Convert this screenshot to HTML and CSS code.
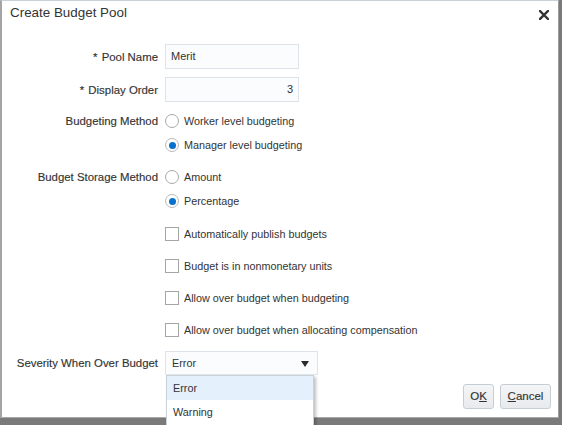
FILE: index.html
```html
<!DOCTYPE html>
<html lang="en">
<head>
<meta charset="utf-8">
<title>Create Budget Pool</title>
<link rel="stylesheet" href="styles.css">
</head>
<body>
<div class="dialog">
  <div class="header">
    <h1 class="title">Create Budget Pool</h1>
    <span class="close" aria-label="Close">
      <svg width="10" height="10" viewBox="0 0 10 10"><path d="M1 1 L9 9 M9 1 L1 9" stroke="#333" stroke-width="2.4" stroke-linecap="square"/></svg>
    </span>
  </div>

  <div class="form">
    <div class="field field-text">
      <span class="label"><span class="req">*</span> Pool Name</span>
      <span class="input">Merit</span>
    </div>
    <div class="field field-text next-text">
      <span class="label"><span class="req">*</span> Display Order</span>
      <span class="input num">3</span>
    </div>

    <div class="field field-choice group-start first-group">
      <span class="label">Budgeting Method</span>
      <span class="choice"><span class="radio"></span>Worker level budgeting</span>
    </div>
    <div class="field field-choice">
      <span class="label"></span>
      <span class="choice"><span class="radio checked"></span>Manager level budgeting</span>
    </div>

    <div class="field field-choice group-start">
      <span class="label">Budget Storage Method</span>
      <span class="choice"><span class="radio"></span>Amount</span>
    </div>
    <div class="field field-choice">
      <span class="label"></span>
      <span class="choice"><span class="radio checked"></span>Percentage</span>
    </div>

    <div class="field field-choice check-row first-check">
      <span class="label"></span>
      <span class="choice"><span class="checkbox"></span>Automatically publish budgets</span>
    </div>
    <div class="field field-choice check-row">
      <span class="label"></span>
      <span class="choice"><span class="checkbox"></span>Budget is in nonmonetary units</span>
    </div>
    <div class="field field-choice check-row">
      <span class="label"></span>
      <span class="choice"><span class="checkbox"></span>Allow over budget when budgeting</span>
    </div>
    <div class="field field-choice check-row">
      <span class="label"></span>
      <span class="choice"><span class="checkbox"></span>Allow over budget when allocating compensation</span>
    </div>

    <div class="field field-select">
      <span class="label">Severity When Over Budget</span>
      <span class="select">
        <span class="select-value">Error</span>
        <span class="arrow"></span>
        <span class="listbox">
          <span class="option active">Error</span>
          <span class="option">Warning</span>
        </span>
      </span>
    </div>
  </div>

  <div class="footer">
    <span class="btn btn-ok">O<u>K</u></span>
    <span class="btn btn-cancel"><u>C</u>ancel</span>
  </div>
</div>
</body>
</html>
```

FILE: styles.css
```css
html, body {
  margin: 0;
  padding: 0;
}

body {
  width: 562px;
  height: 425px;
  overflow: hidden;
  background: #7a7a7a;
  font-family: "Liberation Sans", Arial, sans-serif;
  color: #333;
}

.dialog {
  box-sizing: border-box;
  width: 559px;
  height: 418px;
  background: #fff;
  border-left: 2px solid #a4a4a4;
  border-top: 1px solid #c7d1d9;
  border-right: 1px solid #9c9c9c;
  border-bottom: 1px solid #a8a8a8;
  display: flex;
  flex-direction: column;
  position: relative;
}

.header {
  display: flex;
  justify-content: space-between;
  align-items: flex-start;
  height: 22px;
  padding: 3px 9px 0 8px;
  box-sizing: border-box;
}

.title {
  margin: 0;
  font-size: 13.4px;
  font-weight: normal;
  line-height: 18px;
  color: #333;
}

.close {
  display: flex;
  margin-top: 6px;
}

.form {
  padding-top: 21px;
  display: flex;
  flex-direction: column;
}

.field {
  display: flex;
  align-items: center;
  gap: 7px;
}

.label {
  width: 156px;
  flex: none;
  text-align: right;
  font-size: 11.4px;
  color: #333;
  -webkit-text-stroke: 0.15px #333;
}

.req {
  margin-right: 1px;
}

.field-text {
  height: 25px;
}

.next-text {
  margin-top: 8px;
}

.input {
  box-sizing: border-box;
  width: 134px;
  height: 25px;
  border: 1px solid #dde3e8;
  background: #fbfcfd;
  font-size: 11px;
  line-height: 23px;
  padding: 0 5px;
  color: #333;
}

.input.num {
  text-align: right;
}

.field-choice {
  height: 24px;
}

.group-start {
  margin-top: 8px;
}

.first-group {
  margin-top: 7px;
}

.check-row {
  margin-top: 8px;
}

.first-check {
  margin-top: 9px;
}

.choice {
  display: flex;
  align-items: center;
  font-size: 10.8px;
  color: #333;
}

.radio {
  box-sizing: border-box;
  width: 14px;
  height: 14px;
  border-radius: 50%;
  border: 1px solid #a9a9a9;
  background: #fff;
  margin-right: 5px;
  flex: none;
  display: flex;
  align-items: center;
  justify-content: center;
}

.radio.checked {
  border-color: #b9b9b9;
}

.radio.checked::after {
  content: "";
  width: 7px;
  height: 7px;
  border-radius: 50%;
  background: #0572ce;
}

.checkbox {
  box-sizing: border-box;
  width: 14px;
  height: 14px;
  border: 1px solid #a6a6a6;
  background: #fff;
  margin-right: 5px;
  flex: none;
}

.field-select {
  margin-top: 9px;
  height: 24px;
}

.select {
  position: relative;
  box-sizing: border-box;
  width: 153px;
  height: 24px;
  border: 1px solid #dde3e8;
  border-bottom-color: #e6eaee;
  background: #fbfcfd;
  display: flex;
  align-items: center;
  justify-content: space-between;
  padding: 0 8px 0 6px;
  font-size: 10.8px;
}

.arrow {
  width: 0;
  height: 0;
  border-left: 4px solid transparent;
  border-right: 4px solid transparent;
  border-top: 6px solid #2b2b2b;
  margin-top: 2px;
}

.listbox {
  position: absolute;
  left: 0;
  top: 23px;
  width: 148px;
  height: 60px;
  box-sizing: border-box;
  background: #fff;
  border: 1px solid #c9d2d9;
  box-shadow: 2px 2px 3px rgba(0, 0, 0, 0.25);
  display: flex;
  flex-direction: column;
  z-index: 5;
}

.option {
  height: 24px;
  line-height: 24px;
  padding-left: 6px;
  font-size: 10.8px;
  color: #333;
}

.option.active {
  background: #e4f0fb;
}

.footer {
  margin-top: auto;
  display: flex;
  justify-content: flex-end;
  gap: 6px;
  padding: 0 7px 8px 0;
}

.btn {
  box-sizing: border-box;
  height: 25px;
  border: 1px solid #c6ced5;
  border-radius: 3px;
  background: linear-gradient(#f4f5f6, #e8ebed);
  font-size: 11.5px;
  line-height: 23px;
  text-align: center;
  color: #333;
  -webkit-text-stroke: 0.15px #333;
}

.btn-ok {
  width: 31px;
}

.btn-cancel {
  width: 51px;
}
```
